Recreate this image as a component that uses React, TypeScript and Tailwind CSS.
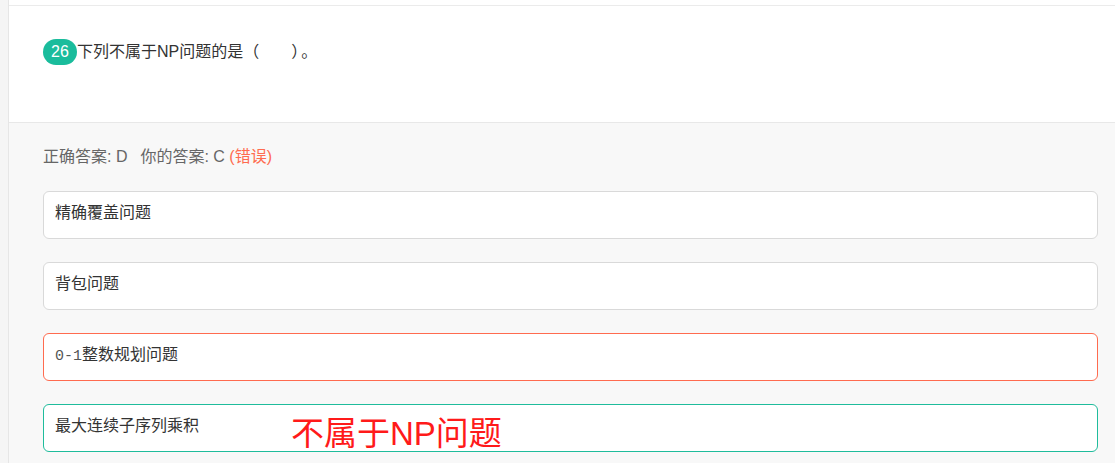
import React from "react";

const font = { fontFamily: '"Liberation Sans", "Noto Sans CJK SC", sans-serif' };

interface OptionProps {
  children: React.ReactNode;
  tone?: "plain" | "wrong" | "right";
}

function Option({ children, tone = "plain" }: OptionProps) {
  const border =
    tone === "wrong"
      ? "border-[#ff6b4f]"
      : tone === "right"
        ? "border-[#1fbc9c]"
        : "border-[#d9d9d9]";
  return (
    <div
      className={`h-[48px] rounded-[6px] border bg-white px-[11px] pt-[9px] text-[16px] leading-[24px] text-[#333] ${border}`}
    >
      {children}
    </div>
  );
}

export default function App() {
  return (
    <div className="relative flex h-[463px] w-[1115px] overflow-hidden bg-[#f5f5f5]" style={font}>
      {/* left rail */}
      <div className="w-[9px] border-r border-[#e6e6e6] bg-[#f5f5f5]" />

      <div className="flex flex-1 flex-col">
        <div className="h-[6px] border-b border-[#ebebeb] bg-white" />

        {/* question */}
        <div className="h-[117px] border-b border-[#e8e8e8] bg-white pl-[34px] pt-[33px]">
          <div className="flex items-center">
            <span className="flex h-[26px] w-[34px] items-center justify-center rounded-full bg-[#1abc9c] text-[16px] text-white">
              26
            </span>
            <span className="text-[16px] leading-[26px] text-[#333]">
              下列不属于NP问题的是（　　）<span className="ml-[2px]">。</span>
            </span>
          </div>
        </div>

        {/* answers */}
        <div className="flex-1 bg-[#f8f8f8] pl-[34px] pr-[17px] pt-[22px]">
          <div className="text-[16px] leading-[24px] text-[#666]">
            正确答案: D<span className="ml-[13px]">你的答案: C</span>{" "}
            <span className="text-[#ff6b4f]">(错误)</span>
          </div>
          <div className="mt-[22px] flex flex-col gap-[23px]">
            <Option>精确覆盖问题</Option>
            <Option>背包问题</Option>
            <Option tone="wrong">
              <span className="text-[15px] text-[#555]" style={{ fontFamily: '"Liberation Mono", monospace' }}>
                0-1
              </span>
              整数规划问题
            </Option>
            <Option tone="right">最大连续子序列乘积</Option>
          </div>
        </div>
      </div>

      {/* handwritten note */}
      <div className="absolute left-[291px] top-[412px] text-[33px] leading-[44px] text-[#ff1a1a]">
        不属于NP问题
      </div>
    </div>
  );
}
